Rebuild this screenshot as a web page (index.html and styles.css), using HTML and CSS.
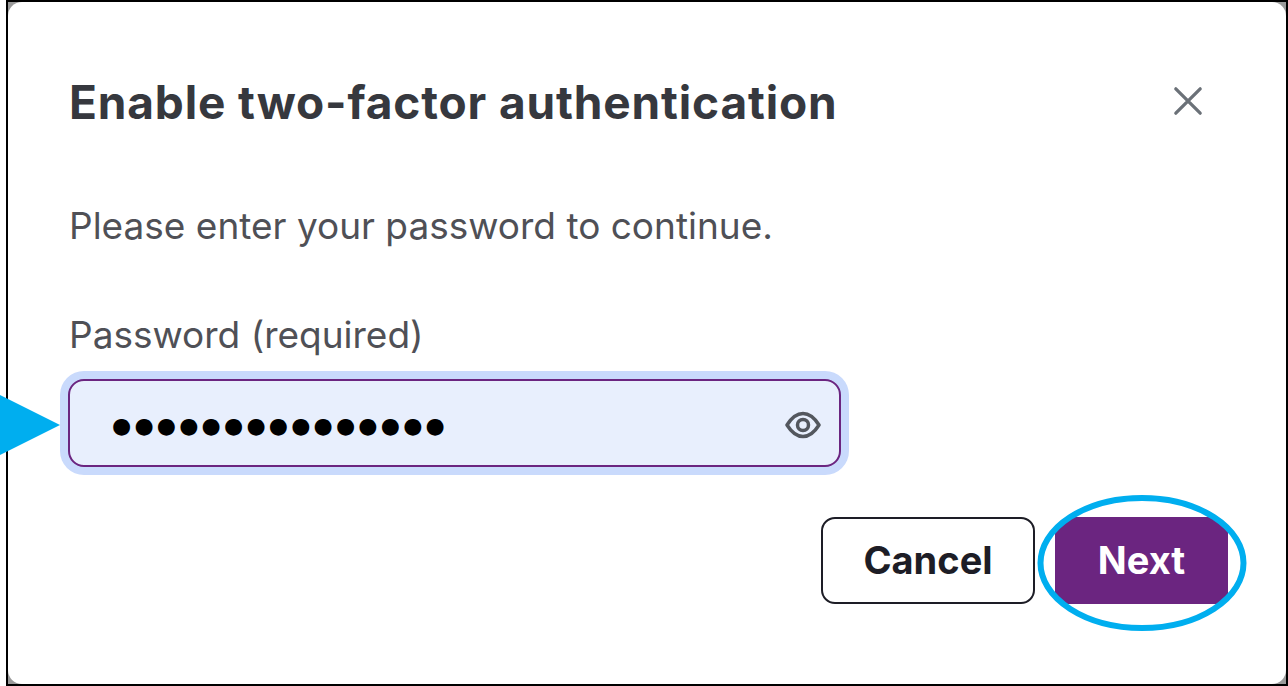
FILE: index.html
```html
<!DOCTYPE html>
<html lang="en">
<head>
<meta charset="utf-8">
<title>Enable two-factor authentication</title>
<link rel="stylesheet" href="styles.css">
</head>
<body>
<div class="frame">
  <div class="dialog">
    <div class="panel">
      <header class="head">
        <h1 class="title">Enable two-factor authentication</h1>
        <svg class="close" width="32" height="32" viewBox="0 0 32 32" aria-label="Close"><path d="M3 3 L29 29 M29 3 L3 29" fill="none" stroke="#6b7178" stroke-width="3.500" stroke-linecap="round"/></svg>
      </header>
      <p class="intro">Please enter your password to continue.</p>
      <label class="label">Password (required)</label>
      <div class="field">
        <span class="dots">●●●●●●●●●●●●●●●</span>
        <svg class="eye" width="36" height="28" viewBox="0 0 36 28"><path d="M2 14 C7 6 12 2.500 18 2.500 C24 2.500 29 6 34 14 C29 22 24 25.500 18 25.500 C12 25.500 7 22 2 14 Z" fill="none" stroke="#53575e" stroke-width="3.500" stroke-linejoin="round"/><circle cx="18" cy="14" r="5.500" fill="none" stroke="#53575e" stroke-width="3.500"/></svg>
      </div>
      <div class="actions">
        <button class="btn cancel">Cancel</button>
        <button class="btn next">Next</button>
      </div>
    </div>
  </div>
  <svg class="pointer" width="62" height="60" viewBox="0 0 62 60"><path d="M0 0 L60 30 L0 60 Z" fill="#00aeef"/></svg>
  <svg class="ring" width="210" height="138" viewBox="0 0 210 138"><ellipse cx="105" cy="69" rx="101.500" ry="65" fill="none" stroke="#00aeef" stroke-width="6"/></svg>
</div>
</body>
</html>
```
FILE: styles.css
```css
* { box-sizing: border-box; }
html, body { margin: 0; height: 100%; background: #fff; }
body { font-family: "Inter", "Liberation Sans", sans-serif; overflow: hidden; }
.frame {
  position: relative;
  width: 1288px;
  height: 686px;
  padding-left: 6px;
  background: #fff;
}
.dialog {
  height: 686px;
  border: 2px solid #000;
  background: #9a9a9a;
}
.panel {
  height: 100%;
  background: #fff;
  border-radius: 14px;
  padding: 72px 56px 0 61px;
  display: flex;
  flex-direction: column;
}
.head { display: flex; justify-content: space-between; align-items: center; height: 56px; }
.title { margin: 0; font-size: 46px; line-height: 56px; font-weight: 700; letter-spacing: 0.860px; color: #36383e; }
.close { margin: -2px 27px 0 0; width: 30px; height: 30px; }
.intro { margin: 74px 0 0; font-size: 37px; line-height: 44px; color: #4f5056; }
.label { margin-top: 65px; font-size: 37px; line-height: 44px; color: #4f5056; }
.field {
  margin: 22px 0 0 -1px;
  width: 773px;
  height: 88px;
  border: 2px solid #6b2580;
  border-radius: 16px;
  background: #e8effd;
  box-shadow: 0 0 0 8px #c9dafc;
  display: flex;
  align-items: center;
  justify-content: space-between;
  padding: 4px 18px 0 42px;
}
.dots { font-family: "DejaVu Sans", sans-serif; font-size: 22px; color: #000; letter-spacing: 3.200px; }
.actions { margin: 50px 2px 0 0; display: flex; justify-content: flex-end; gap: 20px; }
.btn { height: 87px; padding: 0 0 2px; font: 700 38px "Inter", sans-serif; border-radius: 14px; }
.cancel { width: 214px; border: 2px solid #1d1d26; background: #fff; color: #1d1d26; }
.next { width: 173px; border: 0; border-radius: 0; background: #6b2580; color: #fff; clip-path: ellipse(102px 66px at 87px 46px); }
.pointer { position: absolute; left: 0; top: 395px; }
.ring { position: absolute; left: 1037px; top: 494px; }
```
